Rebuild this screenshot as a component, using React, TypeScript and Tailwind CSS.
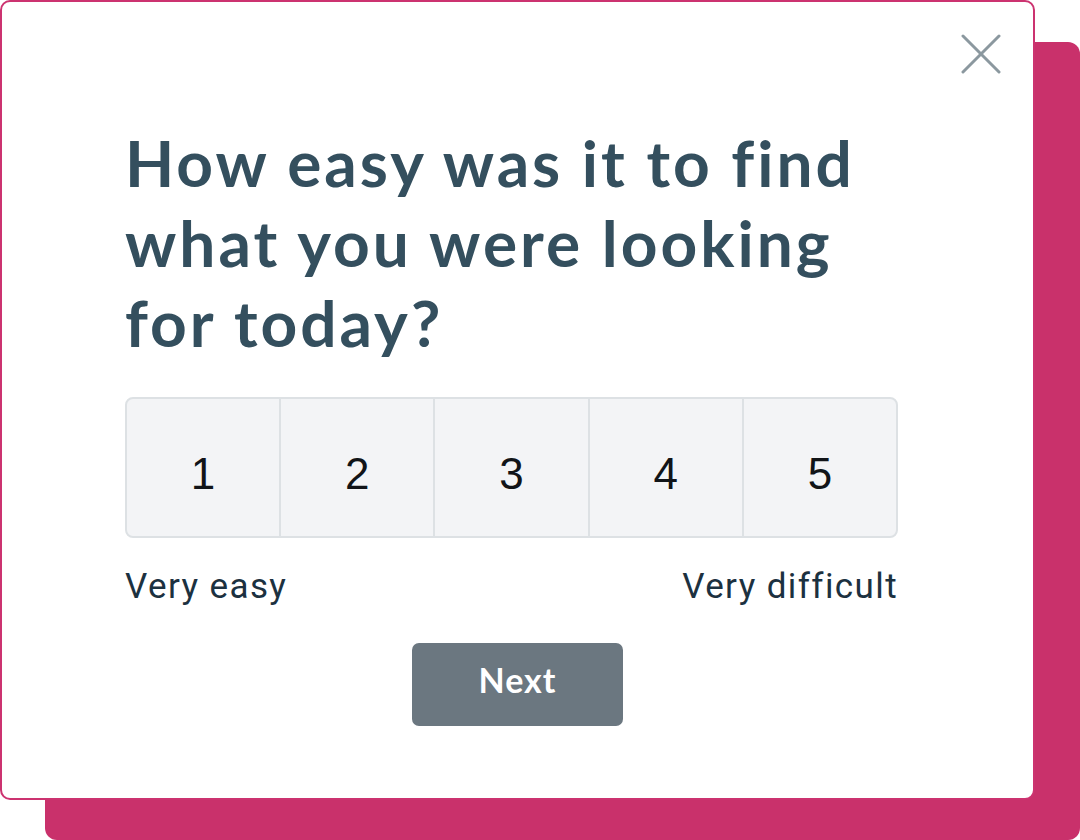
const scale = [1, 2, 3, 4, 5];

function CloseIcon() {
  return (
    <svg width="40" height="40" viewBox="0 0 40 40" fill="none" stroke="#8b989f" strokeWidth="3" strokeLinecap="round">
      <path d="M2 2 L38 38" />
      <path d="M38 2 L2 38" />
    </svg>
  );
}

export default function App() {
  return (
    <div className="relative w-[1080px] h-[840px] bg-white">
      <div className="absolute left-[45px] top-[42px] w-[1035px] h-[798px] rounded-[12px] bg-[#c9316b]" />
      <div className="relative w-[1035px] h-[800px] rounded-[10px] border-2 border-[#cc3370] bg-white">
        <button className="absolute right-[32px] top-[32px]">
          <CloseIcon />
        </button>
        <div className="ml-[123px] w-[773px] pt-[121px]">
          <h1 className="font-['Lato',sans-serif] font-bold text-[64px] leading-[80px] text-[#344f5e] tracking-[3px]">
            How easy was it to find what you were looking for today?
          </h1>
          <div className="mt-[34px] flex h-[141px] rounded-[8px] border-2 border-[#dde1e4] bg-[#f3f4f6] overflow-hidden">
            {scale.map((n, i) => (
              <div
                key={n}
                className={
                  "flex-1 flex items-center justify-center pt-[12px] font-['Liberation_Sans',sans-serif] text-[44px] text-[#111418] " +
                  (i > 0 ? "border-l-2 border-[#dde1e4]" : "")
                }
              >
                {n}
              </div>
            ))}
          </div>
          <div className="mt-[27px] flex justify-between font-['Roboto',sans-serif] text-[35px] leading-[44px] tracking-[1.4px] text-[#1c3140]">
            <span>Very easy</span>
            <span>Very difficult</span>
          </div>
        </div>
        <div className="mt-[34px] flex justify-center">
          <button className="w-[211px] h-[83px] pb-[10px] rounded-[7px] bg-[#6b7780] text-white font-['Lato',sans-serif] font-bold text-[34px] tracking-[1px]">
            Next
          </button>
        </div>
      </div>
    </div>
  );
}
